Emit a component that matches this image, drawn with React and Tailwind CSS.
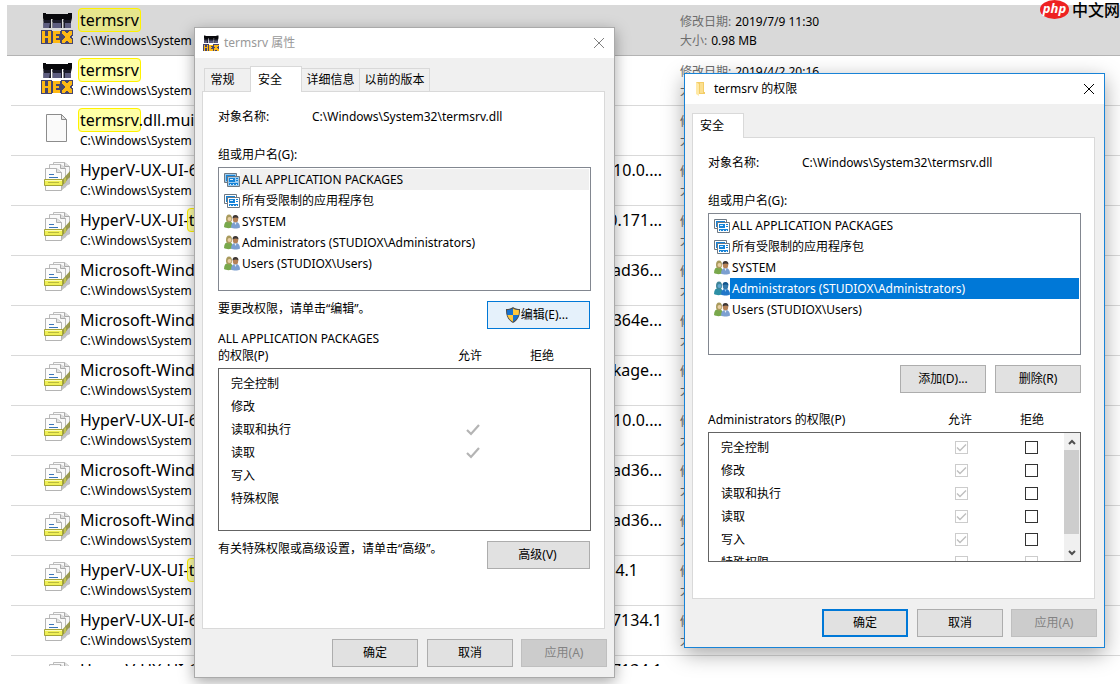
import clsx from 'clsx'

const PATH = 'C:\\Windows\\System32\\termsrv.dll'

const FILES = [
  { icon: 'hex', mark: 'termsrv', selected: true, date: '2019/7/9 11:30', size: '0.98 MB' },
  { icon: 'hex', mark: 'termsrv', date: '2019/4/2 20:16' },
  { icon: 'page', mark: 'termsrv', name: '.dll.mui' },
  { icon: 'docs', name: 'HyperV-UX-UI-6', tail: '10.0....' },
  { icon: 'docs', name: 'HyperV-UX-UI-', markAfter: 't', tail: '0.171...' },
  { icon: 'docs', name: 'Microsoft-Wind', tail: 'ad36...' },
  { icon: 'docs', name: 'Microsoft-Wind', tail: '364e...' },
  { icon: 'docs', name: 'Microsoft-Wind', tail: 'kage...' },
  { icon: 'docs', name: 'HyperV-UX-UI-6', tail: '10.0....' },
  { icon: 'docs', name: 'Microsoft-Wind', tail: 'ad36...' },
  { icon: 'docs', name: 'Microsoft-Wind', tail: 'ad36...' },
  { icon: 'docs', name: 'HyperV-UX-UI-', markAfter: 't', tail: '34.1', shortTail: true },
  { icon: 'docs', name: 'HyperV-UX-UI-6', tail: '7134.1' },
  { icon: 'docs', name: 'HyperV-UX-UI-6', tail: '7134.1', noDetails: true },
]

const PRINCIPALS = [
  { name: 'ALL APPLICATION PACKAGES', icon: 'package' },
  { name: '所有受限制的应用程序包', icon: 'package' },
  { name: 'SYSTEM', icon: 'users' },
  { name: 'Administrators (STUDIOX\\Administrators)', icon: 'users' },
  { name: 'Users (STUDIOX\\Users)', icon: 'users' },
]

const PERMISSIONS = ['完全控制', '修改', '读取和执行', '读取', '写入', '特殊权限']

function HexIcon({ className }) {
  return (
    <svg viewBox="0 0 32 32" className={className} aria-hidden="true">
      <path d="M2 1h3v1h22V1h4v5l-1 4h-7.500V7H21v3h-9.500V7H10v3H3L2 6z" fill="#08080c" />
      <path d="M2.500 8H10v8H2.500zM11.500 8H21v8h-9.500zM22.500 8H30v8h-7.500z" fill="#1c1c2a" />
      <path d="M2.500 11H9l-1 5H2.500zM12 11h8v5h-8zM24 11h6v5h-6z" fill="#5d5d80" />
      <g shapeRendering="crispEdges">
        <path d="M0 18h11v1h9v-1h12v5l-1 2 1 2v5H20v-1h-9v1H0z" fill="#45456f" />
        <path
          d="M1 19h3v5h3v-5h3v12H7v-5H4v5H1zM12 19h7v3h-4v2h3v2h-3v2h4v3h-7zM21 19h3l2 3 2-3h3v3l-3 3 3 3v3h-3l-2-3-2 3h-3v-3l3-3-3-3z"
          fill="#fdb813"
        />
      </g>
    </svg>
  )
}

function PageIcon({ className }) {
  return (
    <svg viewBox="0 0 32 32" className={className} aria-hidden="true">
      <path d="M5.500 2.500h15l5 5v22h-20z" fill="#fafafa" stroke="#8c8c8c" />
      <path d="M20.500 2.500v5h5z" fill="#e4e4e4" stroke="#8c8c8c" />
    </svg>
  )
}

function DocsIcon({ className }) {
  return (
    <svg viewBox="0 0 32 32" className={className} aria-hidden="true">
      <path d="M12.500.500h11l5 4V22l-16 2z" fill="#f9f9f9" stroke="#bcbcbc" />
      <path d="M23.500.500v4h5" fill="#dedede" stroke="#a9a9a9" />
      <path d="M8.500 2.500h11l5 4V25l-16 2z" fill="#f9f9f9" stroke="#bcbcbc" />
      <path d="M19.500 2.500v4h5" fill="#dedede" stroke="#a9a9a9" />
      <path d="M20 29l9-8v-5l-9 7z" fill="#c4c4c4" />
      <path d="M4.500 6.500h11l5 4v18h-16z" fill="#fdfdfd" stroke="#b4b4b4" />
      <path d="M15.500 6.500v4h5" fill="#e4e4e4" stroke="#b0b0b0" />
      <path d="M8 12.500h5M8 15.500h9" stroke="#3b76b8" />
      <path d="M21 18l8-9v6l-8 9z" fill="#8e8e3c" fillOpacity=".9" />
      <path d="M23 17l2-2v5l-2 2z" fill="#c4c452" />
      <path d="M3.500 17.500h18v6h-18z" fill="#efef55" stroke="#a3a338" />
      <path d="M4 18.500h17" stroke="#fbfbb8" />
      <path d="M7 20.500h11" stroke="#b9b93c" />
    </svg>
  )
}

function PackageIcon({ selected }) {
  return (
    <svg viewBox="0 0 16 16" className="size-4 shrink-0" aria-hidden="true">
      <path d="M.5 1.500h12v9H.5z" fill={selected ? '#9ccbee' : '#fff'} stroke="#6d7883" />
      <path d="M2 3h9v6H2z" fill="#1583d8" />
      <path d="M3.500 4.500h12v10h-12z" fill={selected ? '#9ccbee' : '#fff'} stroke="#6d7883" />
      <path d="M5 6h6v4H5zM12 6h2v1h-2zM12 8h2v1h-2zM5 11h9v2H5z" fill="#1583d8" />
      <path d="M6 7h3v1H6zM6 12h1v1H6zM9 12h1v1H9zM12 12h1v1h-1z" fill="#d9efff" />
    </svg>
  )
}

function UsersIcon({ selected }) {
  return (
    <svg viewBox="0 0 16 16" className="size-4 shrink-0" aria-hidden="true">
      <path d="M0 13c0-4 1.500-6 4.500-6S9 9 9 13c-2 1.500-7 1.500-9 0z" fill={selected ? '#2d8fa5' : '#79a84c'} />
      <path d="M2 5c0-3 1-4.500 3-4.500S8 2 8 5c0 2-1 3.500-3 3.500S2 7 2 5z" fill={selected ? '#3e8498' : '#a99a5c'} />
      <circle cx="5.500" cy="5" r="2" fill={selected ? '#62a7cf' : '#e8cfa4'} />
      <path d="M7 13.500C7 10 8.500 8 11.500 8s4.500 2 4.500 5.500c-2 1.300-7 1.300-9 0z" fill={selected ? '#2277c8' : '#7c9fd0'} />
      <ellipse cx="11.500" cy="5" rx="2.700" ry="3.500" fill={selected ? '#3579ab' : '#b58257'} />
      <path d="M8.500 4.500C8.500 2 9.500 1 11.500 1s3 1.200 3 3.500C13 3 11 3 8.500 4.500z" fill={selected ? '#13548b' : '#3d3735'} />
      <path d="M10.500 8.500l1 2.500 1-2.500z" fill={selected ? '#8fc4ee' : '#eef3fa'} />
    </svg>
  )
}

function ShieldIcon() {
  return (
    <svg viewBox="0 0 16 16" className="size-4 shrink-0" aria-hidden="true">
      <path d="M8 0c2 1.400 4.200 2 7 2 .3 6.500-1.800 11-7 14C2.800 13 .7 8.500 1 2c2.800 0 5-.6 7-2z" fill="#4c4c4c" />
      <path d="M8 1.500V8H2.400C2.100 6.300 2 4.700 2.100 3.100 4.300 3 6.300 2.500 8 1.500z" fill="#1672d0" />
      <path d="M8 1.500V8h5.600c.3-1.700.4-3.300.3-4.900C11.700 3 9.700 2.500 8 1.500z" fill="#ffc83d" />
      <path d="M8 8v6.700C5 12.800 3.100 10.700 2.400 8z" fill="#ffc83d" />
      <path d="M8 8v6.700c3-1.900 4.900-4 5.600-6.700z" fill="#1672d0" />
    </svg>
  )
}

function FolderIcon() {
  return (
    <svg viewBox="0 0 16 16" className="size-4 shrink-0" aria-hidden="true">
      <path d="M3 1h8v10h1v2H3z" fill="#f3cd68" />
      <path d="M7 2h3v10H7z" fill="#fbdf8f" />
      <path d="M3 1l3 2v12l-3-2z" fill="#ffe9a6" />
    </svg>
  )
}

function CloseIcon() {
  return (
    <svg viewBox="0 0 12 12" className="size-3" aria-hidden="true">
      <path d="M1 1l10 10M11 1L1 11" stroke="currentColor" fill="none" />
    </svg>
  )
}

const FILE_ICONS = { hex: HexIcon, page: PageIcon, docs: DocsIcon }

function Mark({ children }) {
  return (
    <mark className="-mx-0.5 rounded-sm border border-[#fff200] bg-[#ffff00]/35 px-px text-black">
      {children}
    </mark>
  )
}

function FileRow({ file }) {
  const Icon = FILE_ICONS[file.icon]
  return (
    <li
      className={clsx(
        'flex shrink-0 border-b',
        file.selected
          ? 'ml-[7px] h-[51px] border-[#b4b4b4] bg-[#d9d9d9] pt-px pl-[34px]'
          : 'ml-[11px] h-[50px] border-[#d9d9d9] pl-[30px]'
      )}
    >
      <Icon className="mt-[6px] size-8 shrink-0" />
      <div className="ml-[7px] w-[582px] shrink-0">
        <div className="flex justify-between pt-1 text-[16px] leading-5 whitespace-nowrap">
          <span>
            {file.mark && <Mark>{file.mark}</Mark>}
            {file.name}
            {file.markAfter && <Mark>{file.markAfter}</Mark>}
          </span>
          {file.tail && <span className={clsx(file.shortTail && 'pr-6')}>{file.tail}</span>}
        </div>
        <div className="pt-px leading-5">C:\Windows\System</div>
      </div>
      {!file.noDetails && (
        <dl className="ml-[18px] pt-[6px] leading-[19px] whitespace-nowrap">
          <div className="flex gap-1">
            <dt className="text-[#6d6d6d]">修改日期:</dt>
            <dd>{file.date}</dd>
          </div>
          <div className="flex gap-1">
            <dt className="text-[#6d6d6d]">大小:</dt>
            <dd>{file.size}</dd>
          </div>
        </dl>
      )}
    </li>
  )
}

function Button({ className, primary, disabled, children }) {
  return (
    <button
      type="button"
      disabled={disabled}
      className={clsx(
        'flex h-7 shrink-0 items-center justify-center whitespace-nowrap',
        primary && 'border-2 border-[#0078d7] bg-[#e1e1e1]',
        disabled && 'border border-[#bfbfbf] bg-[#cccccc] text-[#838383]',
        !primary && !disabled && 'border border-[#adadad] bg-[#e1e1e1]',
        className
      )}
    >
      {children}
    </button>
  )
}

function DialogButtons({ primary }) {
  return (
    <div className="mt-[10px] flex justify-end pr-[7px]">
      <Button className="w-[86px]" primary={primary}>确定</Button>
      <Button className="ml-[9px] w-[86px]">取消</Button>
      <Button className="ml-2 w-[86px]" disabled>应用(A)</Button>
    </div>
  )
}

function TitleBar({ icon, title, inactive }) {
  return (
    <header className="flex h-[30px] items-center bg-white px-2">
      {icon}
      <h2 className={clsx('ml-[5px] flex-1', inactive && 'text-[#999999]')}>{title}</h2>
      <button type="button" aria-label="关闭" className={clsx('p-px', inactive && 'text-[#808080]')}>
        <CloseIcon />
      </button>
    </header>
  )
}

function ObjectName() {
  return (
    <div className="flex leading-4">
      <span className="w-[94px]">对象名称:</span>
      <span>{PATH}</span>
    </div>
  )
}

function PrincipalList({ labelId, current, active, className }) {
  return (
    <ul
      role="listbox"
      aria-labelledby={labelId}
      className={clsx('border border-[#828790] bg-white py-px pr-px pl-[5px]', className)}
    >
      {PRINCIPALS.map((p, i) => {
        const selected = i === current
        return (
          <li key={p.name} role="option" aria-selected={selected} className="flex h-[21px] items-center">
            {p.icon === 'package' ? (
              <PackageIcon selected={selected} />
            ) : (
              <UsersIcon selected={selected && active} />
            )}
            <span
              className={clsx(
                'flex h-full flex-1 items-center pl-[2px]',
                selected && (active ? 'bg-[#0078d7] text-white' : 'bg-[#f0f0f0]')
              )}
            >
              {p.name}
            </span>
          </li>
        )
      })}
    </ul>
  )
}

function GrantedMark() {
  return (
    <svg viewBox="0 0 14 12" className="mx-auto h-3 w-[14px]" role="img" aria-label="允许">
      <path d="M1 6l4 4L13 1" fill="none" stroke="#b4b4b4" strokeWidth="2.200" />
    </svg>
  )
}

function CheckBox({ label, checked, disabled }) {
  return (
    <span className="mx-auto grid size-[13px]">
      <input
        type="checkbox"
        aria-label={label}
        defaultChecked={checked}
        disabled={disabled}
        className="peer col-start-1 row-start-1 size-[13px] appearance-none border border-[#333333] bg-white disabled:border-[#cccccc]"
      />
      <svg
        viewBox="0 0 13 13"
        className="pointer-events-none invisible col-start-1 row-start-1 size-[13px] text-[#333333] peer-checked:visible peer-disabled:text-[#bfbfbf]"
        aria-hidden="true"
      >
        <path d="M2 6.500l3 3 6-6" fill="none" stroke="currentColor" strokeWidth="1.400" />
      </svg>
    </span>
  )
}

function PropertiesWindow() {
  return (
    <section
      aria-label="termsrv 属性"
      className="absolute top-[27px] left-[194px] w-[421px] border border-[#aaaaaa] bg-[#f0f0f0] pb-[10px] shadow-[0_4px_14px_rgba(0,0,0,0.35)]"
    >
      <TitleBar icon={<HexIcon className="size-4" />} title="termsrv 属性" inactive />
      <div role="tablist" className="mt-[9px] flex h-6 items-end pl-[9px]">
        {['常规', '安全', '详细信息', '以前的版本'].map((tab) =>
          tab === '安全' ? (
            <button
              key={tab}
              type="button"
              role="tab"
              aria-selected="true"
              className="z-10 -mb-px h-[26px] w-[52px] shrink-0 border border-b-0 border-[#d9d9d9] bg-white pr-3"
            >
              {tab}
            </button>
          ) : (
            <button
              key={tab}
              type="button"
              role="tab"
              aria-selected="false"
              className={clsx(
                'h-[23px] shrink-0 border-t border-r border-[#d9d9d9] bg-[#f0f0f0] whitespace-nowrap',
                tab === '常规' && 'w-[46px] border-r-0 border-l pr-[10px]',
                tab === '详细信息' && 'w-[58px]',
                tab === '以前的版本' && 'w-[70px]'
              )}
            >
              {tab}
            </button>
          )
        )}
      </div>
      <div className="mr-[9px] ml-[7px] h-[538px] border border-[#d9d9d9] bg-white pt-[17px] pr-[13px] pl-[15px]">
        <ObjectName />
        <div id="groups-a" className="mt-[22px] leading-4">组或用户名(G):</div>
        <PrincipalList labelId="groups-a" current={0} className="mt-1 h-[124px]" />
        <div className="mt-[10px] flex justify-between pr-px">
          <p className="leading-4">要更改权限，请单击“编辑”。</p>
          <button
            type="button"
            className="flex h-7 w-[103px] items-center justify-center border border-[#0078d7] bg-[#e5f1fb] pr-1"
          >
            <ShieldIcon />
            编辑(E)...
          </button>
        </div>
        <div className="mt-px flex items-end leading-[17px]">
          <div className="w-[216px]">
            ALL APPLICATION PACKAGES
            <br />
            的权限(P)
          </div>
          <span className="w-[72px] text-center">允许</span>
          <span className="w-[72px] text-center">拒绝</span>
        </div>
        <div className="mt-1 h-[163px] border border-[#646464] pt-[3px]">
          <table>
            <tbody>
              {PERMISSIONS.map((name) => (
                <tr key={name} className="h-[23px]">
                  <th scope="row" className="w-[218px] pl-3 text-left font-normal">{name}</th>
                  <td className="w-[72px]">
                    {(name === '读取和执行' || name === '读取') && <GrantedMark />}
                  </td>
                  <td className="w-[72px]" />
                </tr>
              ))}
            </tbody>
          </table>
        </div>
        <div className="mt-[10px] flex justify-between pr-px">
          <p className="leading-4">有关特殊权限或高级设置，请单击“高级”。</p>
          <Button className="w-[103px] pr-[2px]">高级(V)</Button>
        </div>
      </div>
      <DialogButtons />
    </section>
  )
}

function ScrollBar() {
  return (
    <div className="flex w-4 shrink-0 flex-col bg-[#f0f0f0] pr-px text-[#505050]">
      <button type="button" aria-label="向上滚动" className="flex h-[17px] items-center justify-center">
        <svg viewBox="0 0 8 6" className="h-[6px] w-2">
          <path d="M1 5l3-3 3 3" fill="none" stroke="currentColor" strokeWidth="2" />
        </svg>
      </button>
      <div className="flex-1">
        <div className="h-[84px] bg-[#cdcdcd]" />
      </div>
      <button type="button" aria-label="向下滚动" className="flex h-[17px] items-center justify-center">
        <svg viewBox="0 0 8 6" className="h-[6px] w-2">
          <path d="M1 1l3 3 3-3" fill="none" stroke="currentColor" strokeWidth="2" />
        </svg>
      </button>
    </div>
  )
}

function PermissionsWindow() {
  return (
    <section
      aria-label="termsrv 的权限"
      className="absolute top-[73px] left-[684px] w-[421px] border border-[#1883d7] bg-[#f0f0f0] pb-[10px] shadow-[0_6px_20px_rgba(0,0,0,0.35)]"
    >
      <TitleBar icon={<FolderIcon />} title="termsrv 的权限" />
      <div role="tablist" className="mt-[9px] flex h-6 items-end pl-[7px]">
        <button
          type="button"
          role="tab"
          aria-selected="true"
          className="z-10 -mb-px h-[25px] w-[52px] border border-b-0 border-[#d9d9d9] bg-white pr-3"
        >
          安全
        </button>
      </div>
      <div className="mr-[9px] ml-[7px] h-[462px] border border-[#d9d9d9] bg-white pt-[17px] pr-[13px] pl-[15px]">
        <ObjectName />
        <div id="groups-b" className="mt-[22px] leading-4">组或用户名(G):</div>
        <PrincipalList labelId="groups-b" current={3} active className="mt-1 h-[142px]" />
        <div className="mt-[10px] flex justify-end gap-[9px]">
          <Button className="w-[86px]">添加(D)...</Button>
          <Button className="w-[86px]">删除(R)</Button>
        </div>
        <div className="mt-[18px] flex leading-[17px]">
          <span className="w-[216px]">Administrators 的权限(P)</span>
          <span className="w-[72px] text-center">允许</span>
          <span className="w-[72px] text-center">拒绝</span>
        </div>
        <div className="mt-1 flex h-[130px] justify-between overflow-hidden border border-[#646464]">
          <div className="shrink-0 pt-[3px]">
            <table>
              <tbody>
                {PERMISSIONS.map((name) => (
                  <tr key={name} className="h-[23px]">
                    <th scope="row" className="w-[212px] pl-3 text-left font-normal">{name}</th>
                    <td className="w-20">
                      <CheckBox label={`允许 ${name}`} checked={name !== '特殊权限'} disabled />
                    </td>
                    <td className="w-[60px]">
                      <CheckBox label={`拒绝 ${name}`} disabled={name === '特殊权限'} />
                    </td>
                  </tr>
                ))}
              </tbody>
            </table>
          </div>
          <ScrollBar />
        </div>
      </div>
      <DialogButtons primary />
    </section>
  )
}

function SiteBadge() {
  return (
    <div className="absolute top-0 right-0 flex items-center gap-[3px] leading-[18px] whitespace-nowrap">
      <span className="flex h-[19px] w-[29px] items-center justify-center rounded-[50%] bg-[#ee2222] pb-[3px] text-[13px] font-bold text-white italic">
        php
      </span>
      <span className="text-[16px] font-medium">中文网</span>
    </div>
  )
}

export default function App() {
  return (
    <main className="relative flex h-screen min-w-full flex-col overflow-hidden bg-white pt-[5px] pb-[18px] font-['Noto_Sans','Noto_Sans_CJK_SC',sans-serif] text-[12px] text-black">
      <ul className="flex min-h-0 flex-1 flex-col overflow-hidden">
        {FILES.map((file, i) => (
          <FileRow key={i} file={file} />
        ))}
      </ul>
      <PropertiesWindow />
      <PermissionsWindow />
      <SiteBadge />
    </main>
  )
}
